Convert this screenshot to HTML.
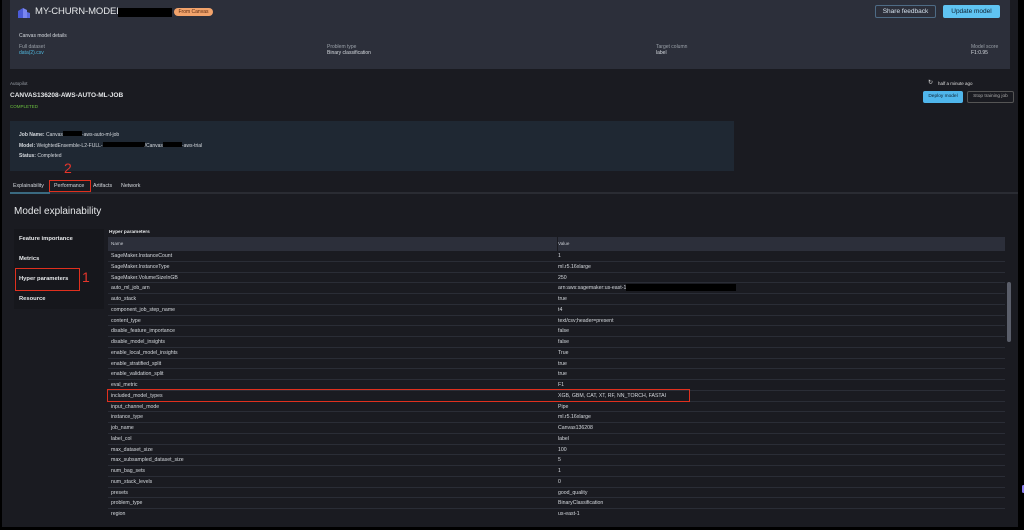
<!DOCTYPE html>
<html><head><style>
*{margin:0;padding:0;box-sizing:border-box}
body{width:1024px;height:530px;background:#000;font-family:"Liberation Sans",sans-serif;color:#d5d9de;position:relative;overflow:hidden}
.a{position:absolute}
#page{left:2px;top:0;width:1016px;height:527px;background:#1a1b21}
#hdr{left:10px;top:0;width:1000px;height:69px;background:#2c2f3a}
.s{font-size:5px;color:#9aa0a8}
.v{font-size:5px;color:#d5d9de}
.btn{font-size:7px;border-radius:2px;text-align:center}
.row{position:absolute;left:108px;width:897px;height:10.75px;border-bottom:1px solid #2a2d36;font-size:5.2px;line-height:10px;color:#d5d9de}
.row span{position:absolute;left:3px}
.row b{position:absolute;left:450px;font-weight:normal}
.blk{background:#000;display:inline-block}
.red{border:1.5px solid #e0301e}
</style></head><body>
<div id="page" class="a"></div>
<div id="hdr" class="a"></div>
<svg class="a" style="left:18px;top:7px" width="12" height="11" viewBox="0 0 12 11"><path d="M0 4 L5 1 L5 11 L0 11Z" fill="#4b5bd6"/><path d="M5 1 L9 3 L9 11 L5 11Z" fill="#7a86f0"/><path d="M9 5 L12 6 L12 11 L9 11Z" fill="#5a6ae0"/></svg>
<div class="a" style="left:35px;top:6px;font-size:9.5px;color:#e6e8ea;letter-spacing:-0.1px">MY-CHURN-MODEL</div>
<div class="a" style="left:118px;top:8px;width:54px;height:9px;background:#000"></div>
<div class="a" style="left:174px;top:8px;width:39px;height:8px;background:#f2a36b;border-radius:4px;font-size:5px;color:#5a2a10;text-align:center;line-height:8px">From Canvas</div>
<div class="a btn" style="left:875px;top:5px;width:61px;height:13px;border:1px solid #4e6b85;color:#d5e2ee;line-height:11px;font-size:6.5px">Share feedback</div>
<div class="a btn" style="left:943px;top:5px;width:57px;height:13px;background:#5fc4f2;color:#0e2030;line-height:13px;font-size:6.5px">Update model</div>
<div class="a v" style="left:19px;top:33px">Canvas model details</div>
<div class="a s" style="left:19px;top:44px">Full dataset</div>
<div class="a" style="left:19px;top:50px;font-size:5px;color:#4fb6dc">data(2).csv</div>
<div class="a s" style="left:327px;top:44px">Problem type</div>
<div class="a v" style="left:327px;top:50px">Binary classification</div>
<div class="a s" style="left:656px;top:44px">Target column</div>
<div class="a v" style="left:656px;top:50px">label</div>
<div class="a s" style="left:971px;top:44px">Model score</div>
<div class="a v" style="left:971px;top:50px">F1:0.95</div>
<div class="a s" style="left:10px;top:81px;font-size:4.5px">Autopilot</div>
<div class="a" style="left:10px;top:92px;font-size:6.5px;font-weight:bold;color:#e6e8ea">CANVAS136208-AWS-AUTO-ML-JOB</div>
<div class="a" style="left:10px;top:104px;font-size:4.5px;color:#6bbf3f">COMPLETED</div>
<div class="a" style="left:928px;top:79px;font-size:6px;color:#ddd">↻</div>
<div class="a" style="left:938px;top:81px;font-size:4.5px;color:#ddd">half a minute ago</div>
<div class="a btn" style="left:923px;top:91px;width:40px;height:12px;background:#4fb6ec;color:#0e2030;font-size:4.8px;line-height:12px">Deploy model</div>
<div class="a btn" style="left:967px;top:91px;width:47px;height:12px;border:1px solid #555;color:#aaa;font-size:4.8px;line-height:10px">Stop training job</div>
<div class="a" style="left:10px;top:121px;width:724px;height:50px;background:#1f2833"></div>
<div class="a v" style="left:19px;top:131px"><b>Job Name:</b> Canvas<span class="blk" style="width:19px;height:5px"></span>-aws-auto-ml-job</div>
<div class="a v" style="left:19px;top:142px"><b>Model:</b> WeightedEnsemble-L2-FULL-<span class="blk" style="width:42px;height:5px"></span>/Canvas<span class="blk" style="width:19px;height:5px"></span>-aws-trial</div>
<div class="a v" style="left:19px;top:153px"><b>Status:</b> Completed</div>
<div class="a" style="left:64px;top:160px;font-size:14px;color:#e5352b">2</div>
<div class="a v" style="left:13px;top:183px;font-size:5.3px">Explainability</div>
<div class="a v" style="left:54px;top:183px;font-size:5.3px">Performance</div>
<div class="a red" style="left:49px;top:180px;width:42px;height:12px"></div>
<div class="a v" style="left:93px;top:183px;font-size:5.3px">Artifacts</div>
<div class="a v" style="left:121px;top:183px;font-size:5.3px">Network</div>
<div class="a" style="left:10px;top:192px;width:1008px;height:2px;background:#2a2c33"></div>
<div class="a" style="left:10px;top:192px;width:40px;height:2px;background:#3a6a80"></div>
<div class="a" style="left:14px;top:206px;font-size:10px;color:#e6e8ea">Model explainability</div>
<div class="a" style="left:14px;top:229px;width:90px;height:80px;background:#16171c"></div>
<div class="a" style="left:19px;top:236px;font-size:5.8px;font-weight:bold;color:#e6e8ea">Feature importance</div>
<div class="a" style="left:19px;top:256px;font-size:5.8px;font-weight:bold;color:#e6e8ea">Metrics</div>
<div class="a" style="left:19px;top:276px;font-size:5.8px;font-weight:bold;color:#e6e8ea">Hyper parameters</div>
<div class="a red" style="left:15px;top:268px;width:65px;height:23px"></div>
<div class="a" style="left:82px;top:270px;font-size:14px;color:#e5352b;line-height:14px">1</div>
<div class="a" style="left:19px;top:296px;font-size:5.8px;font-weight:bold;color:#e6e8ea">Resource</div>
<div class="a" style="left:109px;top:230px;font-size:4.8px;font-weight:bold;color:#e6e8ea">Hyper parameters</div>
<div class="a" style="left:108px;top:237px;width:897px;height:14px;background:#2c2f3a;font-size:4.6px;color:#c8ccd2;line-height:14px"><span style="position:absolute;left:3px">Name</span><span style="position:absolute;left:450px">Value</span></div>
<div class="a" style="left:557px;top:237px;width:1px;height:14px;background:#1a1b21"></div>
<div class="a" style="left:1007px;top:282px;width:4px;height:60px;background:#5a5e6a;border-radius:2px"></div>
<div class="a" style="left:1022px;top:485px;width:3px;height:8px;background:#8a7ff0;border-radius:2px"></div>
<div class="row" style="top:251px"><span>SageMaker.InstanceCount</span><b>1</b></div>
<div class="row" style="top:261.75px"><span>SageMaker.InstanceType</span><b>ml.r5.16xlarge</b></div>
<div class="row" style="top:272.5px"><span>SageMaker.VolumeSizeInGB</span><b>250</b></div>
<div class="row" style="top:283.25px"><span>auto_ml_job_arn</span><b>arn:aws:sagemaker:us-east-1<i class="blk" style="width:110px;height:7px;vertical-align:middle"></i></b></div>
<div class="row" style="top:294px"><span>auto_stack</span><b>true</b></div>
<div class="row" style="top:304.75px"><span>component_job_step_name</span><b>t4</b></div>
<div class="row" style="top:315.5px"><span>content_type</span><b>text/csv;header=present</b></div>
<div class="row" style="top:326.25px"><span>disable_feature_importance</span><b>false</b></div>
<div class="row" style="top:337px"><span>disable_model_insights</span><b>false</b></div>
<div class="row" style="top:347.75px"><span>enable_local_model_insights</span><b>True</b></div>
<div class="row" style="top:358.5px"><span>enable_stratified_split</span><b>true</b></div>
<div class="row" style="top:369.25px"><span>enable_validation_split</span><b>true</b></div>
<div class="row" style="top:380px"><span>eval_metric</span><b>F1</b></div>
<div class="row" style="top:390.75px"><span>included_model_types</span><b>XGB, GBM, CAT, XT, RF, NN_TORCH, FASTAI</b></div>
<div class="row" style="top:401.5px"><span>input_channel_mode</span><b>Pipe</b></div>
<div class="row" style="top:412.25px"><span>instance_type</span><b>ml.r5.16xlarge</b></div>
<div class="row" style="top:423px"><span>job_name</span><b>Canvas136208</b></div>
<div class="row" style="top:433.75px"><span>label_col</span><b>label</b></div>
<div class="row" style="top:444.5px"><span>max_dataset_size</span><b>100</b></div>
<div class="row" style="top:455.25px"><span>max_subsampled_dataset_size</span><b>5</b></div>
<div class="row" style="top:466px"><span>num_bag_sets</span><b>1</b></div>
<div class="row" style="top:476.75px"><span>num_stack_levels</span><b>0</b></div>
<div class="row" style="top:487.5px"><span>presets</span><b>good_quality</b></div>
<div class="row" style="top:498.25px"><span>problem_type</span><b>BinaryClassification</b></div>
<div class="row" style="top:509px;border-bottom:none"><span>region</span><b>us-east-1</b></div>
<div class="a red" style="left:107px;top:389px;width:583px;height:13px"></div>
</body></html>
